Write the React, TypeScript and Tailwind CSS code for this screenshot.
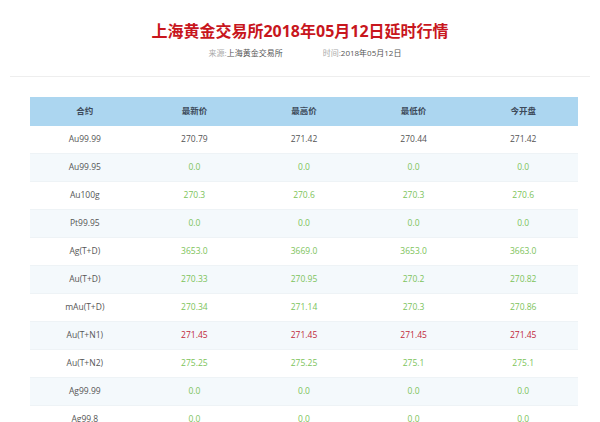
const rows: [string, string[], string][] = [
  ["Au99.99", ["270.79", "271.42", "270.44", "271.42"], "text-[#555]"],
  ["Au99.95", ["0.0", "0.0", "0.0", "0.0"], "text-[#7cc35a]"],
  ["Au100g", ["270.3", "270.6", "270.3", "270.6"], "text-[#7cc35a]"],
  ["Pt99.95", ["0.0", "0.0", "0.0", "0.0"], "text-[#7cc35a]"],
  ["Ag(T+D)", ["3653.0", "3669.0", "3653.0", "3663.0"], "text-[#7cc35a]"],
  ["Au(T+D)", ["270.33", "270.95", "270.2", "270.82"], "text-[#7cc35a]"],
  ["mAu(T+D)", ["270.34", "271.14", "270.3", "270.86"], "text-[#7cc35a]"],
  ["Au(T+N1)", ["271.45", "271.45", "271.45", "271.45"], "text-[#c0283a]"],
  ["Au(T+N2)", ["275.25", "275.25", "275.1", "275.1"], "text-[#7cc35a]"],
  ["Ag99.99", ["0.0", "0.0", "0.0", "0.0"], "text-[#7cc35a]"],
  ["Ag99.8", ["0.0", "0.0", "0.0", "0.0"], "text-[#7cc35a]"],
];
export default function App() {
  return (
    <div className="w-[600px] h-[422px] overflow-hidden bg-white" style={{ fontFamily: '"Open Sans","Noto Sans CJK SC",sans-serif' }}>
      <div className="pt-[19px] text-center text-[16px] font-bold leading-[24px] text-[#c8161d]">上海黄金交易所2018年05月12日延时行情</div>
      <div className="mt-[4px] flex justify-center gap-[40px] pl-[10px] text-[8px] leading-[12px] text-[#555]">
        <span><span className="text-[#aaa]">来源:</span>上海黄金交易所</span>
        <span><span className="text-[#aaa]">时间:</span>2018年05月12日</span>
      </div>
      <div className="mx-[10px] mt-[17px] border-t border-[#eee]" />
      <div className="ml-[30px] mt-[20px] w-[548px] text-[8.5px]">
        <div className="grid h-[29px] grid-cols-5 items-center bg-[#acd6f0] text-center font-bold text-[#3d4a5a]">
          <div>合约</div><div>最新价</div><div>最高价</div><div>最低价</div><div>今开盘</div>
        </div>
        {rows.map(([n, v, c], i) => (
          <div key={n} className={`grid h-[28px] grid-cols-5 items-center border-b border-[#eef3f6] text-center ${i % 2 ? "bg-[#f4f9fc]" : "bg-white"}`}>
            <div className="text-[#555]">{n}</div>
            {v.map((x, j) => <div key={j} className={c}>{x}</div>)}
          </div>
        ))}
      </div>
    </div>
  );
}
